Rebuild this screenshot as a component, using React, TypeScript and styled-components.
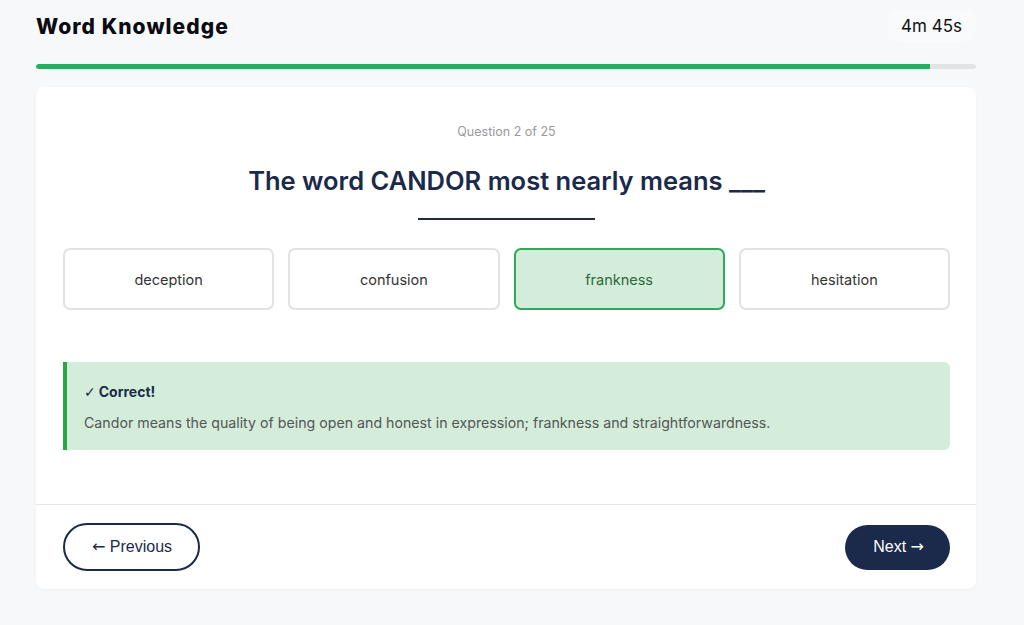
import React from "react";
import styled, { createGlobalStyle } from "styled-components";

const Global = createGlobalStyle`
  html, body { margin: 0; padding: 0; background: #f7f8fa; }
  body { font-family: Inter, "Noto Sans", sans-serif; }
  * { box-sizing: border-box; }
`;

const Page = styled.div`
  width: 1024px;
  height: 625px;
  padding: 0 48px 0 36px;
  display: flex;
  flex-direction: column;
`;

const Header = styled.header`
  height: 52px;
  display: flex;
  align-items: center;
  justify-content: space-between;
`;

const Title = styled.h1`
  margin: 0;
  font-family: Inter, sans-serif;
  font-weight: 800;
  font-size: 21px;
  letter-spacing: 1.05px;
  color: #0b0b12;
`;

const Timer = styled.div`
  font-family: Inter, sans-serif;
  font-size: 17px;
  color: #111;
  padding: 6px 14px;
  border-radius: 12px;
  background: rgba(255, 255, 255, 0.25);
`;

const Track = styled.div`
  margin-top: 12px;
  height: 5px;
  border-radius: 3px;
  background: #e2e3e5;
  overflow: hidden;
`;

const Fill = styled.div`
  height: 100%;
  background: #27ae60;
  border-radius: 3px 0 0 3px;
`;

const Card = styled.main`
  margin-top: 18px;
  background: #fff;
  border-radius: 8px;
  box-shadow: 0 1px 3px rgba(0, 0, 0, 0.04);
  display: flex;
  flex-direction: column;
`;

const Body = styled.section`
  padding: 37px 26px 54px 27px;
  display: flex;
  flex-direction: column;
  align-items: center;
`;

const Counter = styled.div`
  font-size: 12.5px;
  color: #9a9a9a;
  line-height: 16px;
`;

const Question = styled.h2`
  margin: 25px 0 0;
  font-size: 25.5px;
  font-weight: 600;
  color: #1b2a4a;
  line-height: 32px;
`;

const Rule = styled.div`
  margin-top: 21px;
  width: 177px;
  height: 2px;
  background: #222b3f;
`;

const Options = styled.div`
  margin-top: 28px;
  width: 100%;
  display: grid;
  grid-template-columns: repeat(4, 1fr);
  gap: 14px;
`;

const Option = styled.button<{ $selected?: boolean }>`
  height: 62px;
  font-family: Inter, sans-serif;
  font-size: 14.5px;
  border-radius: 7px;
  cursor: pointer;
  border: 2px solid ${(p) => (p.$selected ? "#2eaa5c" : "#e2e2e2")};
  background: ${(p) => (p.$selected ? "#d4edda" : "#fff")};
  color: ${(p) => (p.$selected ? "#2a6a3c" : "#333")};
`;

const Feedback = styled.div`
  margin-top: 52px;
  width: 100%;
  background: #d4edda;
  border-left: 4px solid #28a745;
  border-radius: 0 6px 6px 0;
  padding: 21px 20px 18px 17px;
  display: flex;
  flex-direction: column;
  gap: 13px;
`;

const FeedbackTitle = styled.div`
  font-size: 14px;
  font-weight: 700;
  color: #1b2a4a;
  line-height: 18px;
  height: 18px;
`;

const Check = styled.span`
  font-family: "DejaVu Sans", sans-serif;
  font-weight: 700;
  font-size: 14px;
  line-height: 1;
  margin-right: 3px;
`;

const FeedbackText = styled.div`
  font-size: 14.2px;
  color: #555;
  line-height: 18px;
`;

const Footer = styled.footer`
  border-top: 1px solid #e6e6e6;
  padding: 18px 26px 18px 27px;
  display: flex;
  justify-content: space-between;
  align-items: center;
`;

const NavButton = styled.button<{ $primary?: boolean }>`
  font-family: "Liberation Sans", Arial, sans-serif;
  font-size: 16px;
  line-height: 20px;
  border-radius: 24px;
  cursor: pointer;
  height: ${(p) => (p.$primary ? "45px" : "48px")};
  padding: ${(p) => (p.$primary ? "0 26px 0 28px" : "0 26px 0 27px")};
  border: ${(p) => (p.$primary ? "none" : "2px solid #1b2a4a")};
  background: ${(p) => (p.$primary ? "#1b2a4a" : "#fff")};
  color: ${(p) => (p.$primary ? "#fff" : "#1b2a4a")};
  white-space: pre;
`;

const Arrow = styled.span`
  font-family: "DejaVu Sans", sans-serif;
  font-size: 16px;
  line-height: 1;
`;

const options = ["deception", "confusion", "frankness", "hesitation"];

export default function App() {
  return (
    <>
      <Global />
      <Page>
        <Header>
          <Title>Word Knowledge</Title>
          <Timer>4m 45s</Timer>
        </Header>
        <Track>
          <Fill style={{ width: `${(894 / 940) * 100}%` }} />
        </Track>
        <Card>
          <Body>
            <Counter>Question 2 of 25</Counter>
            <Question>The word CANDOR most nearly means ___</Question>
            <Rule />
            <Options>
              {options.map((o) => (
                <Option key={o} $selected={o === "frankness"}>
                  {o}
                </Option>
              ))}
            </Options>
            <Feedback>
              <FeedbackTitle>
                <Check>✓</Check>Correct!
              </FeedbackTitle>
              <FeedbackText>
                Candor means the quality of being open and honest in expression; frankness and straightforwardness.
              </FeedbackText>
            </Feedback>
          </Body>
          <Footer>
            <NavButton>
              <Arrow>←</Arrow>{" Previous"}
            </NavButton>
            <NavButton $primary>
              {"Next "}<Arrow>→</Arrow>
            </NavButton>
          </Footer>
        </Card>
      </Page>
    </>
  );
}
